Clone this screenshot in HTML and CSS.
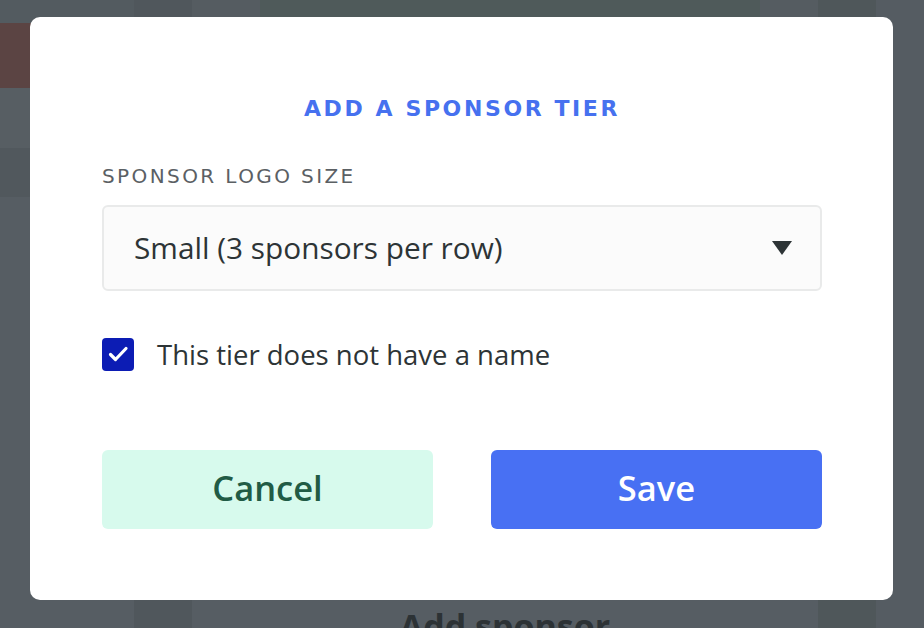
FILE: index.html
```html
<!DOCTYPE html>
<html lang="en">
<head>
<meta charset="utf-8">
<title>Add a sponsor tier</title>
<link rel="stylesheet" href="styles.css">
</head>
<body>
<div class="page">
  <div class="col col-left">
    <div class="blk blk-top"></div>
    <div class="blk blk-red"></div>
    <div class="blk blk-mid"></div>
    <div class="blk blk-dark"></div>
  </div>
  <div class="col col-strip"></div>
  <div class="col col-main">
    <div class="main-head"><div class="head-inner"></div></div>
    <div class="main-body"></div>
    <div class="main-foot">Add sponsor</div>
  </div>
  <div class="col col-strip col-strip-r"></div>
  <div class="col col-right"></div>
</div>

<div class="modal" role="dialog" aria-labelledby="modal-title">
  <h2 class="modal-title" id="modal-title">ADD A SPONSOR TIER</h2>
  <label class="field-label" for="logo-size">SPONSOR LOGO SIZE</label>
  <div class="select">
    <span class="select-value">Small (3 sponsors per row)</span>
    <span class="select-arrow"></span>
  </div>
  <div class="check-row">
    <span class="checkbox">
      <svg width="32" height="33" viewBox="0 0 32 33" aria-hidden="true">
        <path d="M8.5 16.5 L13.5 21.5 L24 10.5" fill="none" stroke="#ffffff" stroke-width="3.2" stroke-linecap="round" stroke-linejoin="round"/>
      </svg>
    </span>
    <span class="check-label">This tier does not have a name</span>
  </div>
  <div class="actions">
    <button class="btn btn-cancel" type="button">Cancel</button>
    <button class="btn btn-save" type="button">Save</button>
  </div>
</div>
</body>
</html>
```

FILE: styles.css
```css
* { box-sizing: border-box; }

html, body {
  margin: 0;
  padding: 0;
  width: 924px;
  height: 628px;
  overflow: hidden;
  background: #565d63;
  font-family: "Open Sans", "Noto Sans", sans-serif;
}

.page {
  display: grid;
  grid-template-columns: 134px 58px 1fr 58px 48px;
  height: 628px;
}

.col-left {
  display: flex;
  flex-direction: column;
  background: #565d63;
}
.blk-top { height: 23px; background: #535b60; }
.blk-red { height: 65px; background: #5b4443; }
.blk-mid { height: 60px; background: #575e63; }
.blk-dark { height: 49px; background: #51585d; }

.col-strip { background: #50575c; }
.col-strip-r { background: #4f575a; }
.col-right { background: #555c62; }

.col-main {
  display: flex;
  flex-direction: column;
  background: #565d63;
}
.main-head {
  height: 60px;
  background: #555c61;
  padding: 0 58px 0 68px;
}
.head-inner { height: 100%; background: #4f5a5a; }
.main-body { flex: 1; }
.main-foot {
  height: 24px;
  overflow: hidden;
  text-align: center;
  font-size: 34px;
  font-weight: 700;
  line-height: 44px;
  color: #2c3235;
}

.modal {
  position: fixed;
  left: 30px;
  top: 17px;
  width: 863px;
  height: 583px;
  background: #ffffff;
  border-radius: 10px;
  padding: 80px 71px 0 72px;
  display: flex;
  flex-direction: column;
}

.modal-title {
  margin: 0;
  text-align: center;
  font-family: "DejaVu Sans", sans-serif;
  font-weight: 700;
  font-size: 22px;
  line-height: 24px;
  letter-spacing: 2.6px;
  color: #4671ef;
}

.field-label {
  margin-top: 45px;
  font-family: "DejaVu Sans", sans-serif;
  font-size: 20px;
  line-height: 20px;
  letter-spacing: 2.4px;
  color: #5b6064;
}

.select {
  margin-top: 19px;
  height: 86px;
  border: 2px solid #e9eaea;
  border-radius: 6px;
  background: #fbfbfb;
  display: flex;
  align-items: center;
  justify-content: space-between;
  padding: 0 28px 0 30px;
}
.select-value {
  font-size: 29.8px;
  line-height: 40px;
  color: #2d3436;
}
.select-arrow {
  width: 0;
  height: 0;
  border-left: 10px solid transparent;
  border-right: 10px solid transparent;
  border-top: 14px solid #2d3436;
}

.check-row {
  margin-top: 47px;
  display: flex;
  align-items: center;
  gap: 23px;
  height: 33px;
}
.checkbox {
  width: 32px;
  height: 33px;
  border-radius: 4px;
  background: #0c1cb4;
  display: block;
}
.checkbox svg { display: block; }
.check-label {
  font-size: 27.5px;
  line-height: 36px;
  color: #2d3436;
}

.actions {
  margin-top: 79px;
  display: flex;
  gap: 58px;
}
.btn {
  flex: 1;
  height: 79px;
  border: none;
  border-radius: 6px;
  font-family: "Open Sans", "Noto Sans", sans-serif;
  font-size: 34.5px;
  font-weight: 600;
  padding: 0 0 4px;
  cursor: pointer;
}
.btn-cancel { background: #d7faed; color: #215b45; }
.btn-save { background: #4870f3; color: #ffffff; }
```
